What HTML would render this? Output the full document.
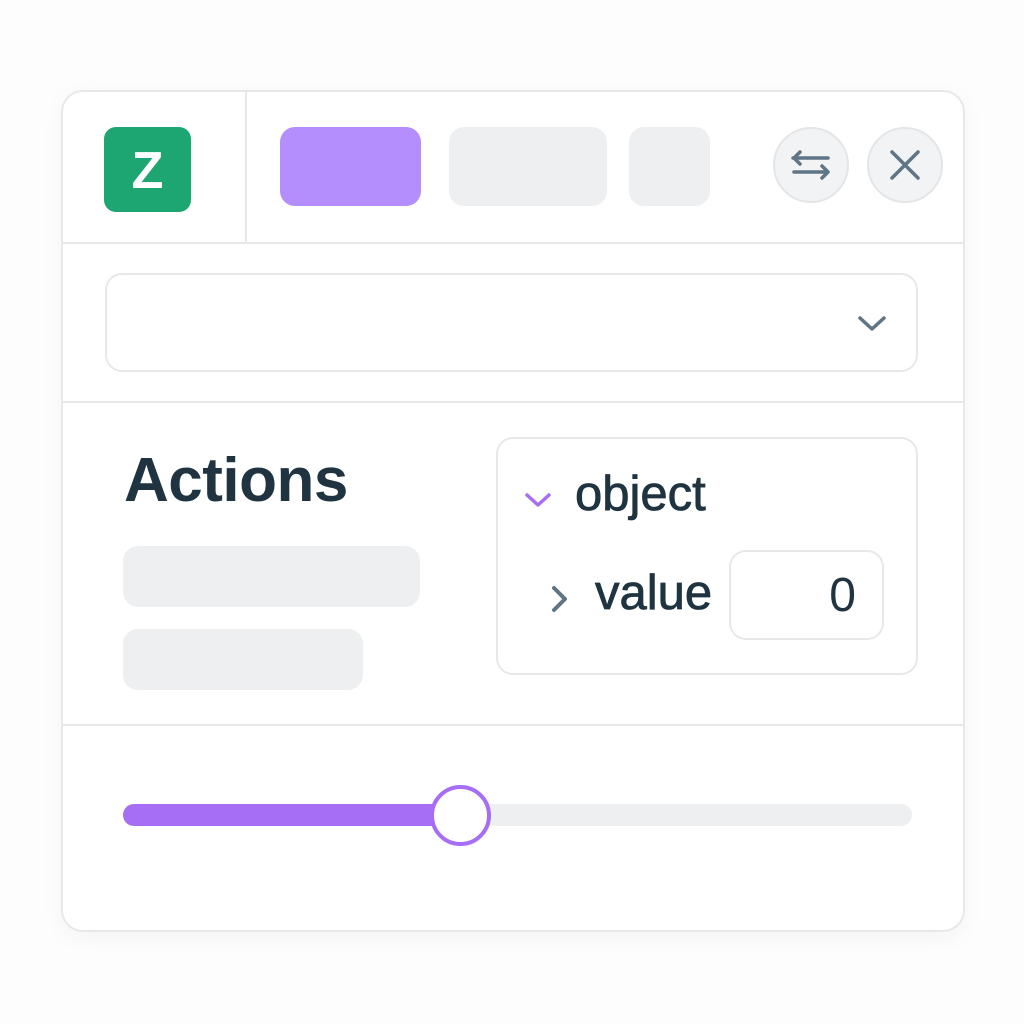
<!DOCTYPE html>
<html><head><style>
body{margin:0;width:1024px;height:1024px;background:#fdfdfd;font-family:"Liberation Sans",sans-serif;position:relative;overflow:hidden}
.a{position:absolute;box-sizing:border-box}
</style></head><body>
<div class="a" style="left:61px;top:90px;width:904px;height:842px;border:2px solid #e6e8ea;border-radius:22px;background:#fff;box-shadow:0 6px 24px rgba(0,0,0,0.04)"></div>
<div class="a" style="left:245px;top:92px;width:2px;height:152px;background:#e6e8ea"></div>
<div class="a" style="left:62px;top:242px;width:902px;height:2px;background:#e6e8ea"></div>
<div class="a" style="left:62px;top:401px;width:902px;height:2px;background:#e6e8ea"></div>
<div class="a" style="left:62px;top:724px;width:902px;height:2px;background:#e6e8ea"></div>
<div class="a" style="left:104px;top:127px;width:87px;height:85px;background:#1ea672;border-radius:12px;color:#fff;font-weight:bold;font-size:52px;text-align:center;line-height:88px">Z</div>
<div class="a" style="left:280px;top:127px;width:141px;height:79px;background:#b38efc;border-radius:15px"></div>
<div class="a" style="left:449px;top:127px;width:158px;height:79px;background:#eeeff0;border-radius:15px"></div>
<div class="a" style="left:629px;top:127px;width:81px;height:79px;background:#eeeff0;border-radius:15px"></div>
<div class="a" style="left:773px;top:127px;width:76px;height:76px;background:#f2f3f4;border:2px solid #e3e5e7;border-radius:50%"></div>
<div class="a" style="left:867px;top:127px;width:76px;height:76px;background:#f2f3f4;border:2px solid #e3e5e7;border-radius:50%"></div>
<svg class="a" style="left:773px;top:127px" width="76" height="76" viewBox="0 0 76 76" fill="none" stroke="#5f7585" stroke-width="3.5" stroke-linecap="round" stroke-linejoin="round"><path d="M20 31H55M27 25L21 31L27 37M21 45H55M49 39L55 45L49 51"/></svg>
<svg class="a" style="left:867px;top:127px" width="76" height="76" viewBox="0 0 76 76" fill="none" stroke="#5f7585" stroke-width="3.5" stroke-linecap="round"><path d="M25 25L51 51M51 25L25 51"/></svg>
<div class="a" style="left:105px;top:273px;width:813px;height:99px;border:2px solid #e6e8ea;border-radius:17px"></div>
<svg class="a" style="left:856px;top:313px" width="32" height="20" viewBox="0 0 32 20" fill="none" stroke="#5f7585" stroke-width="3.5" stroke-linecap="round" stroke-linejoin="round"><path d="M4 5L16 16L28 5"/></svg>
<div class="a" style="left:124px;top:445px;font-size:62px;font-weight:bold;color:#1f3340;letter-spacing:-0.5px">Actions</div>
<div class="a" style="left:123px;top:546px;width:297px;height:61px;background:#eeeff0;border-radius:15px"></div>
<div class="a" style="left:123px;top:629px;width:240px;height:61px;background:#eeeff0;border-radius:15px"></div>
<div class="a" style="left:496px;top:437px;width:422px;height:238px;border:2px solid #e6e8ea;border-radius:17px"></div>
<svg class="a" style="left:522px;top:488px" width="32" height="24" viewBox="0 0 32 24" fill="none" stroke="#a66ef5" stroke-width="3.5" stroke-linecap="round" stroke-linejoin="round"><path d="M5 7L16 17L27 7"/></svg>
<div class="a" style="left:575px;top:466px;font-size:49px;color:#1f3340;-webkit-text-stroke:0.8px #1f3340">object</div>
<svg class="a" style="left:548px;top:582px" width="24" height="34" viewBox="0 0 24 34" fill="none" stroke="#5f7585" stroke-width="4" stroke-linecap="round" stroke-linejoin="round"><path d="M6 6L17 17L6 28"/></svg>
<div class="a" style="left:595px;top:565px;font-size:49px;color:#1f3340;-webkit-text-stroke:0.8px #1f3340">value</div>
<div class="a" style="left:729px;top:550px;width:155px;height:90px;border:2px solid #e6e8ea;border-radius:17px;font-size:48px;color:#1f3340;text-align:right;padding-right:26px;line-height:88px">0</div>
<div class="a" style="left:123px;top:804px;width:789px;height:22px;background:#eeeff0;border-radius:11px"></div>
<div class="a" style="left:123px;top:804px;width:340px;height:22px;background:#a66ef5;border-radius:11px"></div>
<div class="a" style="left:430px;top:785px;width:61px;height:61px;background:#fff;border:4px solid #a66ef5;border-radius:50%"></div>
</body></html>
